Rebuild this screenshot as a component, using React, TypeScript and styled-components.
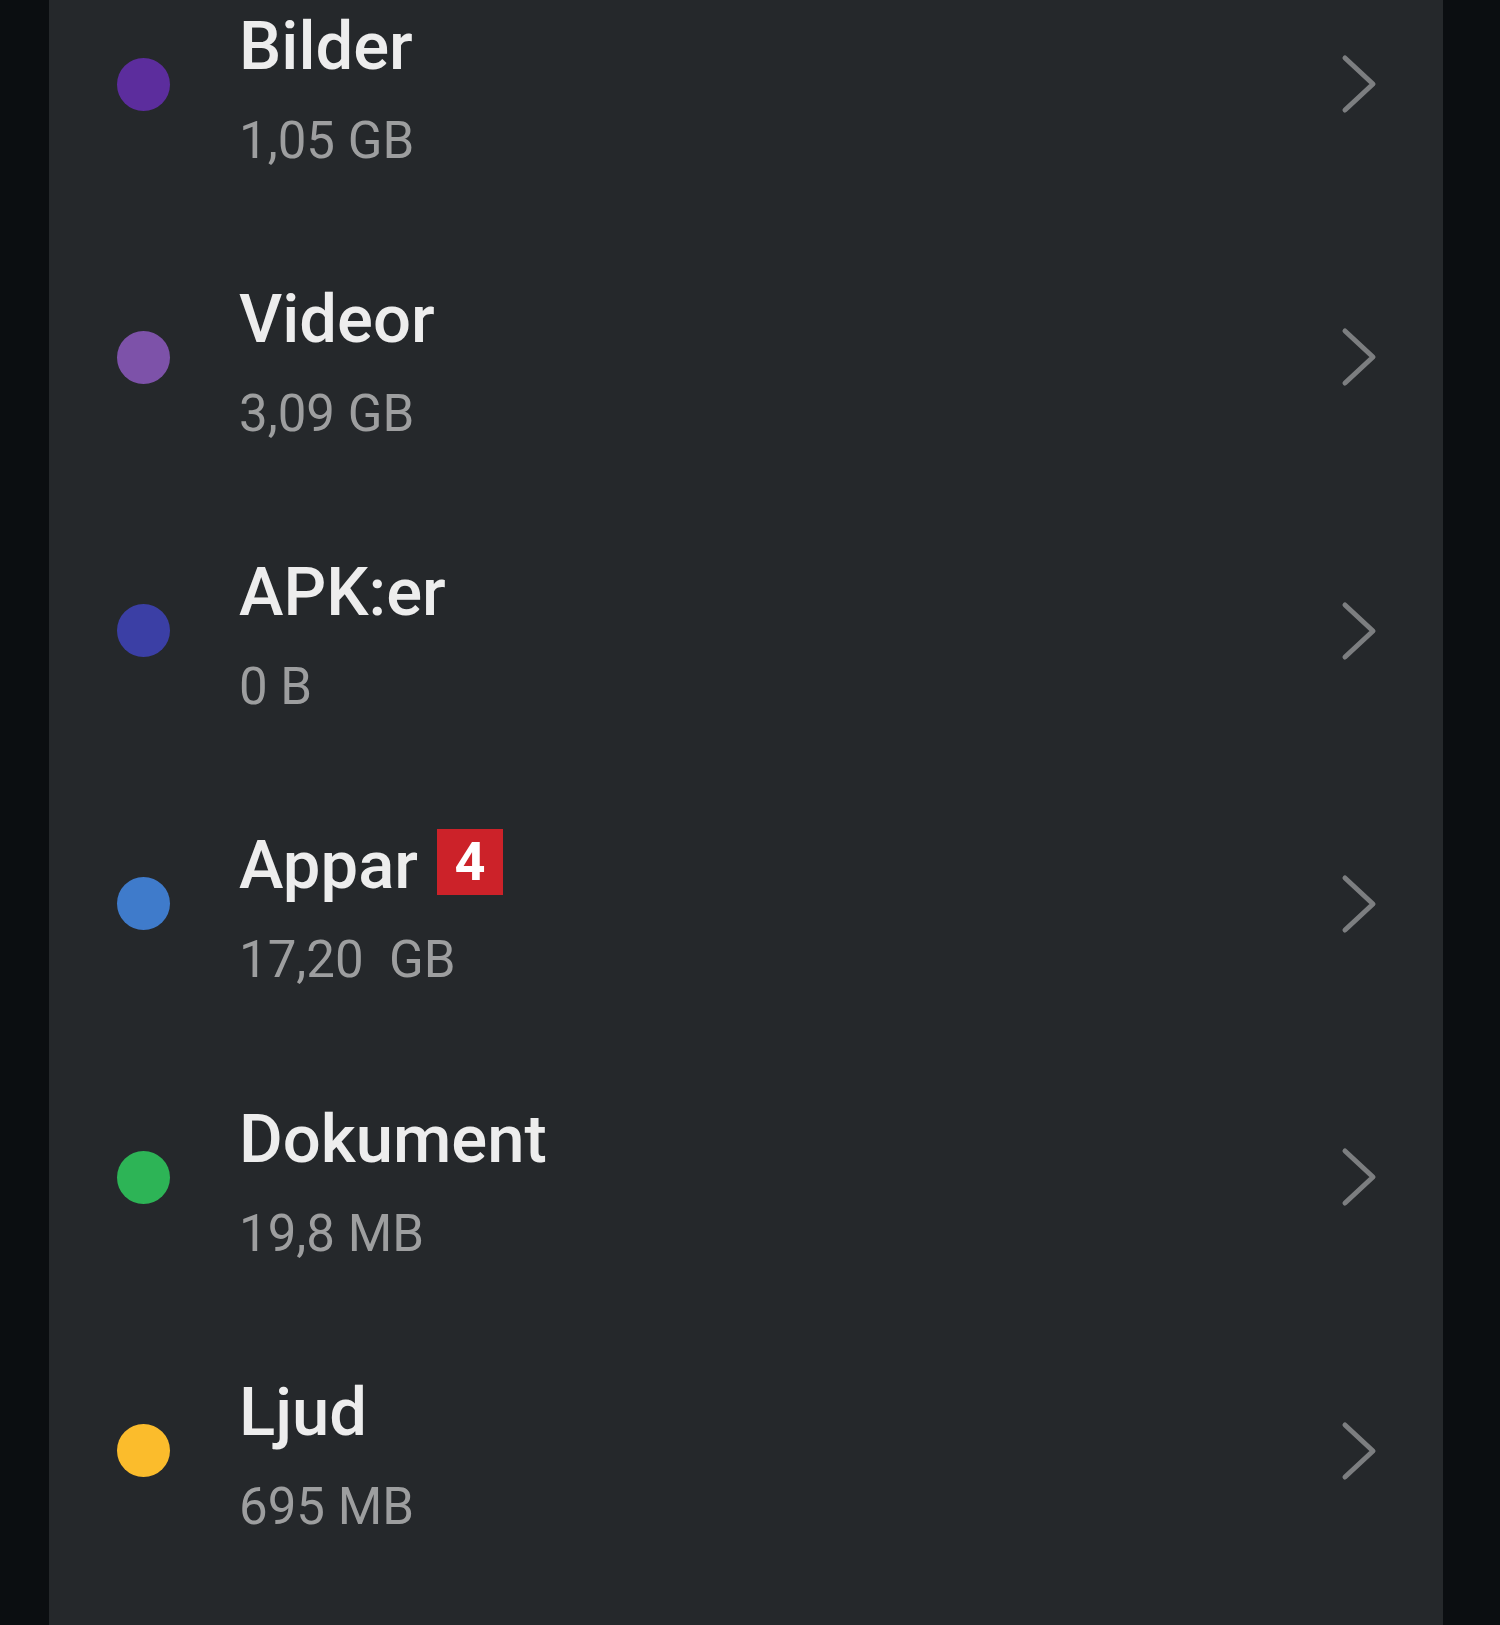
import React from "react";
import styled, { createGlobalStyle } from "styled-components";

const GlobalStyle = createGlobalStyle`
  html, body {
    margin: 0;
    padding: 0;
    background: #0b0e11;
  }
  body {
    font-family: Roboto, "Noto Sans", "Liberation Sans", sans-serif;
    -webkit-font-smoothing: antialiased;
  }
`;

const Page = styled.div`
  height: 1625px;
  display: flex;
  padding: 0 57px 0 49px;
  box-sizing: border-box;
  background: #0b0e11;
`;

const Panel = styled.section`
  flex: 1;
  background: #25282b;
  overflow: hidden;
`;

const List = styled.ul`
  list-style: none;
  margin: -52.6px 0 0;
  padding: 0;
`;

const Row = styled.li`
  height: 273.3px;
  display: flex;
  align-items: center;
  padding: 0 64px 0 68px;
`;

const Dot = styled.span<{ $color: string }>`
  width: 53px;
  height: 53px;
  border-radius: 50%;
  background: ${(p) => p.$color};
  flex-shrink: 0;
`;

const Texts = styled.div`
  flex: 1;
  display: flex;
  flex-direction: column;
  gap: 30px;
  padding-top: 15px;
  margin-left: 69px;
`;

const TitleLine = styled.div`
  display: flex;
  align-items: center;
  height: 68px;
`;

const Title = styled.span`
  font-size: 67px;
  line-height: 68px;
  font-weight: 500;
  color: #ededed;
`;

const Badge = styled.span`
  width: 66px;
  height: 66px;
  margin-left: 19px;
  margin-bottom: 7px;
  background: #cc2229;
  color: #ffffff;
  font-size: 54px;
  font-weight: 700;
  line-height: 66px;
  text-align: center;
`;

const Size = styled.span`
  font-size: 51px;
  line-height: 62px;
  font-weight: 400;
  color: #9d9e9f;
  white-space: pre;
`;

const Chevron = styled.svg`
  width: 40px;
  height: 64px;
  flex-shrink: 0;
`;

type Item = { name: string; size: string; color: string; badge?: string };

const items: Item[] = [
  { name: "Bilder", size: "1,05 GB", color: "#5c2d9d" },
  { name: "Videor", size: "3,09 GB", color: "#7d52a9" },
  { name: "APK:er", size: "0 B", color: "#3b3fa5" },
  { name: "Appar", size: "17,20  GB", color: "#3f7bcb", badge: "4" },
  { name: "Dokument", size: "19,8 MB", color: "#2db456" },
  { name: "Ljud", size: "695 MB", color: "#fbbc2c" },
];

export default function App() {
  return (
    <>
      <GlobalStyle />
      <Page>
        <Panel>
          <List>
            {items.map((it) => (
              <Row key={it.name}>
                <Dot $color={it.color} />
                <Texts>
                  <TitleLine>
                    <Title>{it.name}</Title>
                    {it.badge && <Badge>{it.badge}</Badge>}
                  </TitleLine>
                  <Size>{it.size}</Size>
                </Texts>
                <Chevron viewBox="0 0 40 64" aria-hidden="true">
                  <polyline
                    points="6,6 34,32 6,58"
                    fill="none"
                    stroke="#7c7e80"
                    strokeWidth="5"
                    strokeLinecap="round"
                    strokeLinejoin="round"
                  />
                </Chevron>
              </Row>
            ))}
          </List>
        </Panel>
      </Page>
    </>
  );
}
